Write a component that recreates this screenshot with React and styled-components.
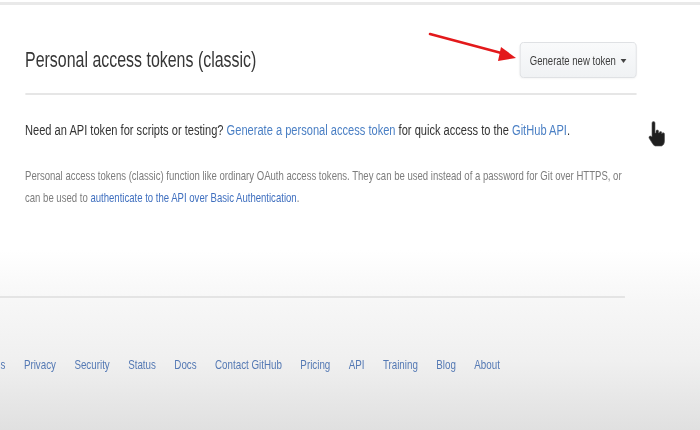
import React from "react";
import styled, { createGlobalStyle } from "styled-components";

/* The captured page is a horizontally squeezed video frame of a 110% zoomed
   browser: the layout is written at its natural size and the canvas is
   squeezed by SQUEEZE, like the recording. */
const SQUEEZE = 0.725;

const GlobalStyle = createGlobalStyle`
  html, body { margin: 0; padding: 0; }
  body {
    font-family: "Liberation Sans", Arial, Helvetica, sans-serif;
    background: #ffffff;
    overflow: hidden;
  }
`;

const Page = styled.div`
  position: relative;
  width: 700px;
  height: 430px;
  overflow: hidden;
  background: linear-gradient(
    to bottom,
    #ffffff 0px,
    #ffffff 250px,
    #f7f7f7 300px,
    #f0f0f0 360px,
    #e0e0e0 430px
  );
`;

const Canvas = styled.div`
  width: ${700 / SQUEEZE}px;
  transform: scaleX(${SQUEEZE});
  transform-origin: 0 0;
`;

const TopRule = styled.div`
  height: 3px;
  margin-top: 2px;
  background: #e9e9e9;
`;

const Main = styled.main`
  width: 843px;
  margin-left: 34.5px;
`;

const Header = styled.div`
  display: flex;
  align-items: center;
  justify-content: space-between;
  padding: 37px 0 15px;
  border-bottom: 2px solid #e6e6e6;
`;

const Title = styled.h2`
  margin: 0;
  font-weight: 400;
  font-size: 22px;
  color: #363636;
`;

const Button = styled.button`
  display: flex;
  align-items: center;
  gap: 6px;
  height: 36px;
  padding: 0 13px;
  font-family: inherit;
  font-size: 13.2px;
  color: #3d3d3d;
  background: linear-gradient(#f9fafb, #f0f2f4);
  border: 1px solid #dadcdf;
  border-radius: 5px;
  box-shadow: 0 1px 2px rgba(0, 0, 0, 0.04);
`;

const Caret = styled.span`
  width: 0;
  height: 0;
  border-left: 4px solid transparent;
  border-right: 4px solid transparent;
  border-top: 4px solid #444;
  margin-top: 1px;
`;

const Lead = styled.p`
  margin: 25px 0 0;
  font-size: 15.3px;
  line-height: 20px;
  color: #333333;
  white-space: nowrap;
`;

const Note = styled.p`
  margin: 25px 0 0;
  font-size: 13.2px;
  line-height: 22px;
  color: #7c7c7c;
  white-space: nowrap;
`;

const Link = styled.a`
  color: ${(p) => p.$color || "#4a7fc4"};
  text-decoration: none;
`;

const Footer = styled.footer`
  margin-top: 87px;
  width: 862px;
  border-top: 2px solid #e4e4e4;
`;

const FooterLinks = styled.nav`
  display: flex;
  gap: 25.4px;
  margin: 59px 0 0 -29.2px;
  font-size: 13.5px;
`;

const FooterLink = styled.a`
  color: #5479b4;
  text-decoration: none;
  line-height: 16px;
`;

const Arrow = styled.svg`
  position: absolute;
  left: 425px;
  top: 28px;
`;

const Cursor = styled.svg`
  position: absolute;
  left: 646px;
  top: 120px;
  filter: blur(0.6px);
`;

const footerItems = [
  "Terms",
  "Privacy",
  "Security",
  "Status",
  "Docs",
  "Contact GitHub",
  "Pricing",
  "API",
  "Training",
  "Blog",
  "About",
];

export default function App() {
  return (
    <>
      <GlobalStyle />
      <Page>
        <Canvas>
          <TopRule />
          <Main>
            <Header>
              <Title>Personal access tokens (classic)</Title>
              <Button>
                Generate new token
                <Caret />
              </Button>
            </Header>
            <Lead>
              Need an API token for scripts or testing?{" "}
              <Link href="#">Generate a personal access token</Link> for quick
              access to the <Link href="#">GitHub API</Link>.
            </Lead>
            <Note>
              Personal access tokens (classic) function like ordinary OAuth access
              tokens. They can be used instead of a password for Git over HTTPS, or
              <br />
              can be used to{" "}
              <Link href="#" $color="#3f6fbf">
                authenticate to the API over Basic Authentication
              </Link>
              .
            </Note>
          </Main>
          <Footer>
            <FooterLinks>
              {footerItems.map((t) => (
                <FooterLink key={t} href="#">
                  {t}
                </FooterLink>
              ))}
            </FooterLinks>
          </Footer>
        </Canvas>
        <Arrow width="100" height="40" viewBox="0 0 100 40">
          <line x1="5" y1="6" x2="80" y2="26" stroke="#e3191b" strokeWidth="2.6" strokeLinecap="round" />
          <polygon points="91,30 76,19 73,33" fill="#e3191b" />
        </Arrow>
        <Cursor width="24" height="30" viewBox="0 0 24 30">
          <path
            d="M6 3 Q6 1.5 7.5 1.5 Q9 1.5 9 3 L9 13 L10 13 L10 11 Q10 10 11.3 10 Q12.5 10 12.5 11 L12.5 13 L13.2 13 Q13.2 11.5 14.5 11.5 Q15.8 11.5 15.8 12.8 L15.8 14 Q16 12.8 17.2 12.8 Q18.5 12.8 18.5 14.2 L18.5 21 Q18.5 25 15.5 26 L9 26 Q7 25 5.5 22 L3 18 Q2.5 16.5 4 16 Q5 15.8 6 17 Z"
            fill="#1f1f1f"
            stroke="#555"
            strokeWidth="0.6"
          />
        </Cursor>
      </Page>
    </>
  );
}
